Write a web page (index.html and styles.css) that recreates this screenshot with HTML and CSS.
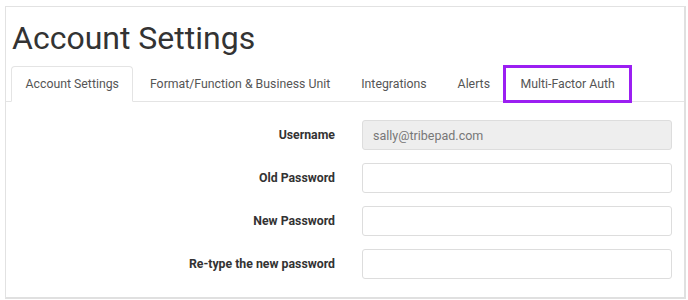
FILE: index.html
```html
<!DOCTYPE html>
<html lang="en">
<head>
    <meta charset="UTF-8">
    <meta name="viewport" content="width=device-width, initial-scale=1.0">
    <title>Account Settings</title>
    <link rel="stylesheet" href="styles.css">
</head>
<body>
    <div class="frame">
        <h1>Account Settings</h1>

        <ul class="tabs">
            <li class="tab active">Account Settings</li>
            <li class="tab">Format/Function &amp; Business Unit</li>
            <li class="tab">Integrations</li>
            <li class="tab">Alerts</li>
            <li class="tab highlight">Multi-Factor Auth</li>
        </ul>

        <form class="settings-form">
            <label class="form-label" for="username">Username</label>
            <input class="form-input" id="username" type="text" value="sally@tribepad.com" disabled>

            <label class="form-label" for="oldPassword">Old Password</label>
            <input class="form-input" id="oldPassword" type="password">

            <label class="form-label" for="newPassword">New Password</label>
            <input class="form-input" id="newPassword" type="password">

            <label class="form-label" for="retypePassword">Re-type the new password</label>
            <input class="form-input" id="retypePassword" type="password">
        </form>
    </div>
</body>
</html>
```

FILE: styles.css
```css
body {
    margin: 0;
    padding: 6px 2px 0 5px;
    background-color: #ffffff;
    font-family: Roboto, "Liberation Sans", Arial, sans-serif;
    color: #333333;
}

.frame {
    height: 290px;
    border: 1px solid #e2e2e2;
    border-right: 2px solid #e0e0e0;
    border-bottom: 2px solid #e0e0e0;
    overflow: hidden;
}

h1 {
    margin: 0;
    padding: 11px 0 0 6px;
    height: 48px;
    font-size: 32px;
    line-height: 40px;
    font-weight: 400;
    color: #333333;
}

.tabs {
    list-style: none;
    margin: 0;
    padding: 0 0 0 5px;
    display: flex;
    border-bottom: 1px solid #e4e4e4;
}

.tab {
    padding: 10px 13.5px;
    margin-right: 2px;
    margin-bottom: -1px;
    font-size: 12.3px;
    line-height: 14px;
    color: #555555;
    border: 1px solid transparent;
    border-radius: 4px 4px 0 0;
}

.tab.active {
    border-color: #e4e4e4;
    border-bottom-color: #ffffff;
    background-color: #ffffff;
}

/* highlight box around the MFA tab */
.tab.highlight {
    padding: 10px 15px;
    margin-left: -2px;
    border-radius: 0;
    outline: 3px solid #9b1ff2;
    outline-offset: -2px;
}

.settings-form {
    display: grid;
    grid-template-columns: 329px 310px;
    column-gap: 27px;
    row-gap: 13px;
    align-items: center;
    margin-top: 18px;
}

.form-label {
    text-align: right;
    font-size: 12.3px;
    font-weight: 700;
    color: #333333;
}

.form-input {
    box-sizing: border-box;
    height: 30px;
    width: 310px;
    padding: 0 10px;
    border: 1px solid #dddddd;
    border-radius: 3px;
    font-family: inherit;
    font-size: 12.5px;
    color: #777777;
    background-color: #ffffff;
}

.form-input:disabled {
    background-color: #eeeeee;
    color: #777777;
}
```
